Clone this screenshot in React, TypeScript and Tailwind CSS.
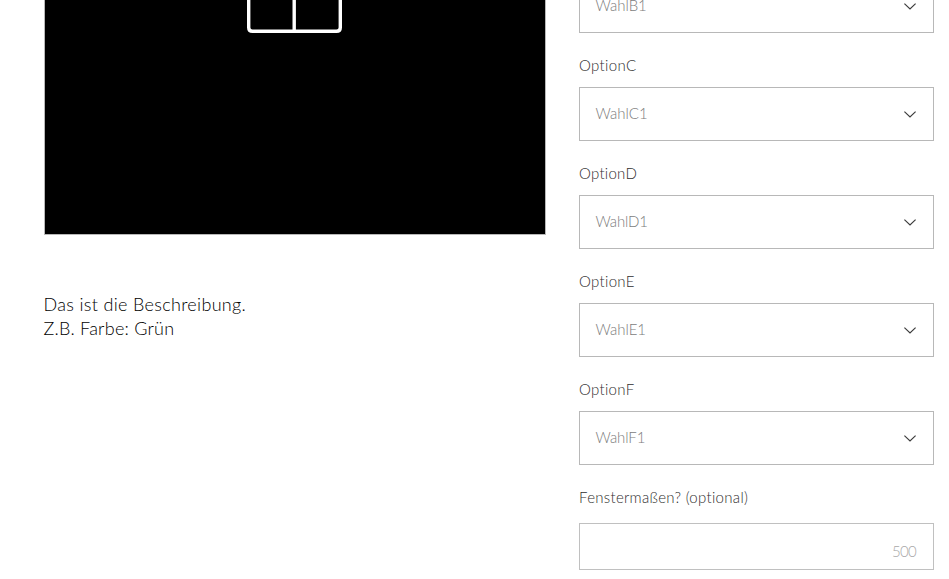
type Option = { label?: string; value: string; labelClass?: string; valueClass?: string };

const options: Option[] = [
  { value: "WahlB1", valueClass: "tracking-[-0.02px]" },
  { label: "OptionC", value: "WahlC1", labelClass: "tracking-[0.36px]", valueClass: "tracking-[0.03px]" },
  { label: "OptionD", value: "WahlD1", labelClass: "tracking-[0.26px]", valueClass: "tracking-[-0.15px]" },
  { label: "OptionE", value: "WahlE1", labelClass: "tracking-[0.32px]", valueClass: "tracking-[-0.02px]" },
  { label: "OptionF", value: "WahlF1", labelClass: "tracking-[0.3px]", valueClass: "tracking-[-0.1px]" },
];

function Chevron() {
  return (
    <svg width="12" height="7" viewBox="0 0 12 7" fill="none" stroke="#3c3c3c" strokeWidth="1.2">
      <path d="M0.4 0.6 L6 6 L11.6 0.6" />
    </svg>
  );
}

function SelectField({ label, value, labelClass, valueClass }: Option) {
  return (
    <div className="flex flex-col">
      {label && (
        <div className="h-[33px] text-[15px] leading-[22px] text-[#2f2e2e]">
          <span className={labelClass}>{label}</span>
        </div>
      )}
      <button className="mb-[21px] flex h-[54px] w-full items-center justify-between border border-[#b8b8b8] pr-[17px] pl-[15.5px] text-left text-[15px] text-[#7c7c7c]">
        <span className={`-mt-0.5 ${valueClass}`}>{value}</span>
        <Chevron />
      </button>
    </div>
  );
}

export default function App() {
  return (
    <div className="flex h-[579px] w-[949px] overflow-hidden bg-white pl-11 font-['Lato',sans-serif] font-light [font-variant-ligatures:none]">
      <section className="w-[535px]">
        <div className="flex h-[235px] w-[502px] justify-center border-r border-b border-l border-[#b8b8b8] bg-black">
          <svg width="96" height="34" viewBox="0 0 96 34" fill="none" stroke="#fff" strokeWidth="3.4">
            <path d="M1.7 -4 V27.5 Q1.7 31.3 5.5 31.3 H89.5 Q93.3 31.3 93.3 27.5 V-4 M47.2 -4 V31" />
          </svg>
        </div>
        <p className="mt-[57px] text-[18px] leading-6 text-black">
          <span className="-ml-[0.5px] block tracking-[0.32px]">Das ist die Beschreibung.</span>
          <span className="-ml-[0.5px] block tracking-[0.24px]">Z.B. Farbe: Grün</span>
        </p>
      </section>
      <section className="-mt-[21px] w-[355px]">
        {options.map((o) => (
          <SelectField key={o.value} {...o} />
        ))}
        <div className="h-[37px] text-[15px] leading-[22px] tracking-[0.3px] text-[#2f2e2e]">Fenstermaßen? (optional)</div>
        <div className="flex h-[47px] items-center justify-end border border-[#c0c0c0] pt-[10px] pr-[17px] text-[15px] tracking-[-0.7px] text-[#a8a8a8]">
          500
        </div>
      </section>
    </div>
  );
}
